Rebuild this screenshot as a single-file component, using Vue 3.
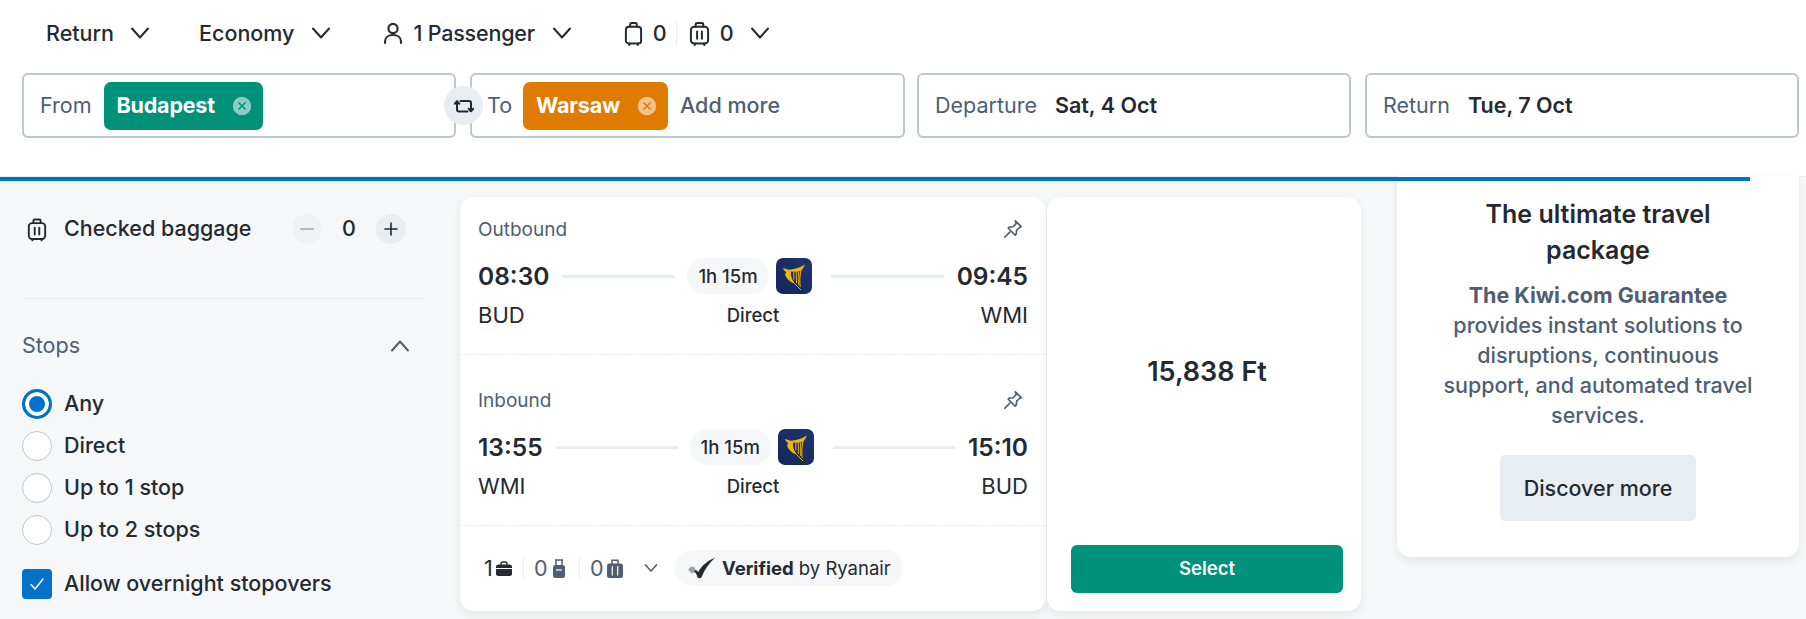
<script setup>
const radios = [
  { label: 'Any', checked: true },
  { label: 'Direct', checked: false },
  { label: 'Up to 1 stop', checked: false },
  { label: 'Up to 2 stops', checked: false }
]

const legs = [
  { title: 'Outbound', depart: '08:30', arrive: '09:45', from: 'BUD', to: 'WMI', duration: '1h 15m' },
  { title: 'Inbound', depart: '13:55', arrive: '15:10', from: 'WMI', to: 'BUD', duration: '1h 15m' }
]
</script>

<template>
  <div class="page">
    <header class="header">
      <div class="options">
        <button class="option option-trip">Return
          <svg class="chevron" viewBox="0 0 18 18"><path d="M1 4.500l8 9 8-9" /></svg>
        </button>
        <button class="option option-cabin">Economy
          <svg class="chevron" viewBox="0 0 18 18"><path d="M1 4.500l8 9 8-9" /></svg>
        </button>
        <button class="option option-pax">
          <svg class="line-icon person" viewBox="0 0 20 24">
            <circle cx="10" cy="7.500" r="4.600" />
            <path d="M2 22v-1.500c0-4 3.400-6.500 8-6.500s8 2.500 8 6.500V22" />
          </svg>
          <span class="pax-text">1 Passenger</span>
          <svg class="chevron" viewBox="0 0 18 18"><path d="M1 4.500l8 9 8-9" /></svg>
        </button>
        <div class="bags">
          <svg class="line-icon cabin-bag" viewBox="0 0 20 26">
            <rect x="2" y="6" width="16" height="17.500" rx="3" />
            <path d="M6.500 6V3.500q0-1.500 1.500-1.500h4q1.500 0 1.500 1.500V6M5.500 23.500V25M14.500 23.500V25" />
          </svg>
          <span class="bag-count">0</span>
          <span class="bag-sep"></span>
          <svg class="line-icon hold-bag" viewBox="0 0 22 26">
            <rect x="2" y="6" width="18" height="17.500" rx="3.500" />
            <path d="M7 6V3.500q0-1.500 1.500-1.500h5q1.500 0 1.500 1.500V6M8.500 11v7.500M13.500 11v7.500M6 23.500V25M16 23.500V25" />
          </svg>
          <span class="bag-count">0</span>
          <svg class="chevron" viewBox="0 0 18 18"><path d="M1 4.500l8 9 8-9" /></svg>
        </div>
      </div>

      <div class="fields">
        <div class="field">
          <span class="field-label">From</span>
          <span class="chip chip-green">
            <span class="chip-text">Budapest</span>
            <svg class="chip-clear" viewBox="0 0 20 20">
              <circle cx="10" cy="10" r="10" />
              <path d="M6.500 6.500l7 7M13.500 6.500l-7 7" />
            </svg>
          </span>
          <button class="swap">
            <svg viewBox="0 0 20 20">
              <path d="M3 5.500v8q0 2 2 2h8.500" />
              <path d="M.7 7.800L3 5.300l2.300 2.500" />
              <path d="M17 15V7q0-2-2-2H6.500" />
              <path d="M14.700 12.700L17 15.200l2.300-2.500" />
            </svg>
          </button>
        </div>
        <div class="field field-to">
          <span class="field-label">To</span>
          <span class="chip chip-orange">
            <span class="chip-text">Warsaw</span>
            <svg class="chip-clear" viewBox="0 0 20 20">
              <circle cx="10" cy="10" r="10" />
              <path d="M6.500 6.500l7 7M13.500 6.500l-7 7" />
            </svg>
          </span>
          <span class="add-more">Add more</span>
        </div>
        <div class="field field-date">
          <span class="field-label">Departure</span>
          <span class="field-value">Sat, 4 Oct</span>
        </div>
        <div class="field field-date">
          <span class="field-label">Return</span>
          <span class="field-value">Tue, 7 Oct</span>
        </div>
      </div>
    </header>

    <main class="main">
      <div class="progress"></div>

      <aside class="filters">
        <div class="baggage-row">
          <svg class="line-icon filter-bag" viewBox="0 0 22 26">
            <rect x="2" y="6" width="18" height="17.500" rx="3.500" />
            <path d="M7 6V3.500q0-1.500 1.500-1.500h5q1.500 0 1.500 1.500V6M8.500 11v7.500M13.500 11v7.500M6 23.500V25M16 23.500V25" />
          </svg>
          <span class="baggage-label">Checked baggage</span>
          <div class="stepper">
            <button class="step step-off"><svg viewBox="0 0 14 14"><path d="M1 7h12" /></svg></button>
            <span class="step-value">0</span>
            <button class="step"><svg viewBox="0 0 14 14"><path d="M1 7h12M7 1v12" /></svg></button>
          </div>
        </div>

        <div class="stops-head">
          <span>Stops</span>
          <svg class="chevron chevron-up" viewBox="0 0 18 18"><path d="M1 13.500l8-9 8 9" /></svg>
        </div>

        <div class="radios">
          <label class="radio-row" v-for="radio in radios" :key="radio.label">
            <span class="radio" :class="{ 'radio-on': radio.checked }"></span>
            <span class="row-text">{{ radio.label }}</span>
          </label>
        </div>

        <label class="check-row">
          <span class="checkbox">
            <svg viewBox="0 0 16 16"><path d="M2 8.500l4 4.500 8-10" /></svg>
          </span>
          <span class="row-text">Allow overnight stopovers</span>
        </label>
      </aside>

      <section class="ticket">
        <div class="ticket-info">
          <div class="leg" v-for="leg in legs" :key="leg.title">
            <div class="leg-head">
              <span>{{ leg.title }}</span>
              <svg class="pin" viewBox="0 0 24 24">
                <path d="M14.500 3l6.500 6.500-1.600.6-3.400 3.200-.5 4.200-1.200 1.200-7.500-7.500 1.200-1.200 4.200-.5 3.200-3.400z" />
                <path d="M8.500 15.500L3 21" />
              </svg>
            </div>
            <div class="leg-times">
              <strong>{{ leg.depart }}</strong>
              <span class="leg-line leg-line-left"></span>
              <span class="duration">{{ leg.duration }}</span>
              <svg class="carrier" viewBox="0 0 36 36">
                <defs>
                  <linearGradient id="navy" x1="0" y1="1" x2="1" y2="0">
                    <stop offset="0" stop-color="#14265a" />
                    <stop offset="1" stop-color="#20356f" />
                  </linearGradient>
                </defs>
                <rect width="36" height="36" rx="7" fill="url(#navy)" />
                <path class="harp-solid" d="M7 10C10 11 12 12 15 11.500C20 11 25 9 29 6.500C28 9 26.500 11.500 24.500 13C21 14 18 14 15 13.500C14.500 17 15.500 20.500 18 24L16.500 25C13 23 10 20 9 16.500C10 15.500 10 14 9.500 13.500C8 12.500 7.500 11.500 7 10Z" />
                <path class="harp-line" d="M16 23l9 9M25 12c-1.200 6-1.500 11-.8 17M17.800 14v7.500M20.200 14l.3 11M22.600 14l.2 13" />
              </svg>
              <span class="leg-line"></span>
              <strong>{{ leg.arrive }}</strong>
            </div>
            <div class="leg-codes">
              <span>{{ leg.from }}</span>
              <span class="leg-direct">Direct</span>
              <span class="leg-to">{{ leg.to }}</span>
            </div>
          </div>

          <div class="ticket-foot">
            <span class="foot-num foot-dark">1</span>
            <svg class="foot-icon briefcase" viewBox="0 0 16 15">
              <path d="M5 4V2.500Q5 1 6.500 1h3Q11 1 11 2.500V4" fill="none" stroke="#252a31" stroke-width="1.400" />
              <path d="M2.500 3.500h11Q16 3.500 16 6v6.500q0 2.500-2.500 2.500h-11Q0 15 0 12.500V6q0-2.500 2.500-2.500z" fill="#252a31" />
              <path d="M0 7.500h16" stroke="#fff" stroke-width="1" />
            </svg>
            <span class="foot-sep"></span>
            <span class="foot-num">0</span>
            <svg class="foot-icon trolley" viewBox="0 0 12 19">
              <path d="M3 6V1h6v5M2 1h8" fill="none" stroke="#4f5e71" stroke-width="1.500" />
              <rect y="6" width="12" height="13" rx="2.500" fill="#4f5e71" />
              <path d="M3 11h6" stroke="#fff" stroke-width="1.200" />
            </svg>
            <span class="foot-sep foot-sep-wide"></span>
            <span class="foot-num">0</span>
            <svg class="foot-icon suitcase" viewBox="0 0 16 19">
              <path d="M5 5V1.200h6V5" fill="none" stroke="#4f5e71" stroke-width="1.500" />
              <rect y="4.500" width="16" height="14.500" rx="2.500" fill="#4f5e71" />
              <path d="M5.300 7v9.500M10.700 7v9.500" stroke="#fff" stroke-width="1.200" />
            </svg>
            <svg class="chevron chevron-foot" viewBox="0 0 18 18"><path d="M2 5l7 8 7-8" /></svg>
            <span class="verified">
              <svg class="verified-mark" viewBox="0 0 34 26">
                <path d="M1 15l4-4 4 1.500 1.500 5-4.500 2z" fill="#9aa3ad" />
                <path d="M8 16.500c2-1.500 4-1 5 1.500C17 10.500 24 4.500 33 1c-7 6.500-12.500 14-16 23-1.500 1.800-4 1.500-4.800-.5-.8-2.500-2.200-5-4.200-7z" fill="#252a31" />
              </svg>
              <span><b>Verified</b> by Ryanair</span>
            </span>
          </div>
        </div>

        <div class="ticket-price">
          <div class="price">15,838 Ft</div>
          <button class="select">Select</button>
        </div>
      </section>

      <aside class="promo">
        <h2>The ultimate travel package</h2>
        <p><b>The Kiwi.com Guarantee</b> provides instant solutions to disruptions, continuous support, and automated travel services.</p>
        <button class="discover">Discover more</button>
      </aside>
    </main>
  </div>
</template>

<style scoped>
.page {
  width: 1806px;
  height: 619px;
  overflow: hidden;
  background: #f5f7f9;
  color: #252a31;
  font-family: Inter, "Noto Sans", sans-serif;
  font-size: 21.5px;
}

button {
  border: 0;
  background: none;
  padding: 0;
  color: inherit;
  font: inherit;
}

svg {
  display: block;
  flex: none;
}

.chevron {
  width: 18px;
  height: 18px;
  fill: none;
  stroke: #252a31;
  stroke-width: 2;
  stroke-linecap: round;
  stroke-linejoin: round;
}

.line-icon {
  fill: none;
  stroke: #252a31;
  stroke-width: 2.100;
  stroke-linecap: round;
  stroke-linejoin: round;
}

/* header */
.header {
  height: 176px;
  background: #fff;
  border-bottom: 1px solid #e8edf1;
  box-sizing: content-box;
}

.options {
  display: flex;
  align-items: center;
  height: 66px;
  padding-left: 46px;
}

.option {
  display: flex;
  align-items: center;
  font-weight: 500;
}

.option-trip {
  gap: 17px;
  margin-right: 50px;
}

.option-cabin {
  gap: 18px;
  margin-right: 53px;
}

.option-pax {
  gap: 10px;
  margin-right: 53px;
}

.option-pax .chevron {
  margin-left: 8px;
}

.pax-text {
  letter-spacing: -0.2px;
}

.person {
  width: 20px;
  height: 24px;
}

.bags {
  display: flex;
  align-items: center;
  font-weight: 500;
}

.cabin-bag {
  width: 19px;
  height: 25px;
}

.hold-bag {
  width: 21px;
  height: 25px;
}

.bag-count {
  width: 14px;
  margin-left: 10px;
}

.bag-sep {
  width: 1px;
  height: 22px;
  margin: 0 12px 0 9px;
  background: #e8edf1;
}

.bags .chevron {
  margin-left: 17px;
}

.fields {
  display: flex;
  gap: 14px;
  padding: 7px 7px 0 22px;
}

.field {
  position: relative;
  display: flex;
  align-items: center;
  box-sizing: border-box;
  width: 434px;
  height: 65px;
  padding-left: 16px;
  background: #fff;
  border: 2px solid #bac7d5;
  border-radius: 6px;
}

.field-to {
  width: 435px;
  margin-right: -2px;
  padding-left: 15px;
}

.field-label {
  margin-right: 12px;
  margin-bottom: 1px;
  color: #4f5e71;
}

.field-to .field-label {
  margin-right: 11px;
}

.field-date .field-label {
  margin-right: 18px;
}

.field-value {
  margin-bottom: 1px;
  font-weight: 600;
}

.chip {
  display: flex;
  align-items: center;
  height: 48px;
  padding: 0 11px 0 13px;
  border-radius: 7px;
  color: #fff;
  font-weight: 700;
}

.chip-text {
  margin-bottom: 1px;
  letter-spacing: -0.2px;
}

.chip-green {
  background: #00917a;
  gap: 17px;
}

.chip-orange {
  background: #df7b00;
  gap: 17px;
}

.chip-clear {
  width: 20px;
  height: 20px;
  fill: rgba(255, 255, 255, 0.55);
  stroke-width: 1.500;
}

.chip-green .chip-clear {
  stroke: #00917a;
}

.chip-orange .chip-clear {
  stroke: #df7b00;
}

.add-more {
  margin-left: 12px;
  margin-bottom: 1px;
  color: #4f5e71;
  font-weight: 500;
}

.swap {
  position: absolute;
  right: -29px;
  top: 11px;
  z-index: 2;
  display: flex;
  align-items: center;
  justify-content: center;
  width: 39px;
  height: 39px;
  border-radius: 50%;
  background: #e8edf1;
}

.swap svg {
  width: 20px;
  height: 20px;
  fill: none;
  stroke: #252a31;
  stroke-width: 2;
  stroke-linecap: round;
  stroke-linejoin: round;
}

/* main */
.main {
  position: relative;
  display: flex;
  align-items: flex-start;
  gap: 36px;
  padding-left: 22px;
}

.progress {
  position: absolute;
  top: 0;
  left: 0;
  z-index: 3;
  width: 1750px;
  height: 4px;
  background: #0172cb;
}

.filters {
  flex: none;
  width: 402px;
  padding-top: 37px;
}

.baggage-row {
  display: flex;
  align-items: center;
  height: 30px;
  padding-bottom: 54px;
  border-bottom: 1px solid #e8edf1;
}

.filter-bag {
  width: 20px;
  height: 25px;
  margin: 0 17px 0 5px;
}

.baggage-label {
  width: 228px;
  margin-bottom: 3px;
  font-weight: 500;
}

.stepper {
  display: flex;
  align-items: center;
}

.step {
  display: flex;
  align-items: center;
  justify-content: center;
  width: 30px;
  height: 30px;
  border-radius: 50%;
  background: #e8edf1;
}

.step svg {
  width: 14px;
  height: 14px;
  fill: none;
  stroke: #252a31;
  stroke-width: 1.600;
  stroke-linecap: round;
}

.step-off {
  opacity: 0.4;
}

.step-value {
  width: 54px;
  margin-bottom: 2px;
  text-align: center;
  font-weight: 500;
}

.stops-head {
  display: flex;
  align-items: center;
  justify-content: space-between;
  height: 24px;
  margin-top: 34px;
  padding-right: 15px;
  color: #4f5e71;
}

.chevron-up {
  margin-top: 2px;
  stroke: #4f5e71;
}

.radios {
  display: flex;
  flex-direction: column;
  gap: 12px;
  margin-top: 32px;
}

.radio-row,
.check-row {
  display: flex;
  align-items: center;
  gap: 12px;
  height: 30px;
  font-weight: 500;
}

.row-text {
  margin-bottom: 2px;
}

.radio {
  box-sizing: border-box;
  width: 30px;
  height: 30px;
  border: 1px solid #bac7d5;
  border-radius: 50%;
  background: #fff;
}

.radio-on {
  border: 3px solid #0172cb;
  box-shadow: inset 0 0 0 4px #fff;
  background: #0172cb;
}

.check-row {
  margin-top: 24px;
}

.checkbox {
  display: flex;
  align-items: center;
  justify-content: center;
  width: 30px;
  height: 30px;
  border-radius: 4px;
  background: #0172cb;
}

.checkbox svg {
  width: 16px;
  height: 16px;
  fill: none;
  stroke: #fff;
  stroke-width: 1.500;
  stroke-linecap: round;
  stroke-linejoin: round;
}

.ticket {
  flex: none;
  display: flex;
  gap: 1px;
  margin-top: 20px;
  height: 414px;
}

.ticket-info,
.ticket-price {
  background: #fff;
  border-radius: 14px;
  box-shadow: 0 4px 10px rgba(37, 42, 49, 0.08);
}

.ticket-info {
  display: flex;
  flex-direction: column;
  box-sizing: border-box;
  width: 586px;
}

.leg {
  box-sizing: border-box;
  height: 158px;
  padding: 20px 18px 0;
  border-bottom: 1px dashed #e8edf1;
}

.leg + .leg {
  height: 171px;
  padding-top: 33px;
}

.leg-head {
  display: flex;
  align-items: center;
  justify-content: space-between;
  height: 24px;
  color: #4f5e71;
  font-size: 19px;
}

.pin {
  width: 22px;
  height: 22px;
  margin-right: 4px;
  fill: none;
  stroke: #4f5e71;
  stroke-width: 1.800;
  stroke-linecap: round;
  stroke-linejoin: round;
}

.leg-times {
  display: flex;
  align-items: center;
  height: 36px;
  margin-top: 17px;
}

.leg-times strong {
  font-size: 24.500px;
  font-weight: 600;
}

.leg-line {
  flex: 1;
  height: 3px;
  margin-left: 19px;
  margin-right: 13px;
  background: #e8edf1;
}

.leg-line-left {
  margin-left: 13px;
  margin-right: 12px;
}

.duration {
  display: flex;
  align-items: center;
  height: 36px;
  padding: 0 11px;
  border-radius: 18px;
  background: #f5f7f9;
  font-size: 18.500px;
  font-weight: 500;
}

.carrier {
  width: 36px;
  height: 36px;
  margin-left: 7px;
}

.harp-solid {
  fill: #f1b30f;
}

.harp-line {
  fill: none;
  stroke: #f1b30f;
  stroke-width: 1;
}

.leg-codes {
  display: grid;
  grid-template-columns: 1fr auto 1fr;
  align-items: center;
  height: 24px;
  margin-top: 8px;
  font-size: 22px;
}

.leg-direct {
  font-size: 18.500px;
  font-weight: 500;
}

.leg-to {
  text-align: right;
}

.ticket-foot {
  display: flex;
  align-items: center;
  flex: 1;
  padding-left: 24px;
  padding-bottom: 1px;
}

.foot-num {
  width: 12px;
  color: #4f5e71;
  text-align: center;
}

.foot-dark {
  width: 8px;
  color: #252a31;
}

.foot-icon {
  margin-left: 4px;
}

.briefcase {
  width: 16px;
  height: 15px;
}

.trolley {
  width: 12px;
  height: 19px;
  margin-left: 7px;
}

.suitcase {
  width: 16px;
  height: 19px;
  margin-left: 5px;
}

.foot-sep {
  width: 1px;
  height: 20px;
  margin: 0 10px 0 11px;
  background: #e8edf1;
}

.foot-sep-wide {
  margin-left: 14px;
}

.chevron-foot {
  width: 14px;
  height: 14px;
  margin-left: 21px;
  stroke: #4f5e71;
}

.verified {
  display: flex;
  align-items: center;
  gap: 6px;
  height: 36px;
  margin-left: 17px;
  padding: 0 12px;
  border-radius: 18px;
  background: #f5f7f9;
  font-size: 18.500px;
}

.verified b {
  font-weight: 700;
}

.verified-mark {
  width: 29px;
  height: 22px;
}

.ticket-price {
  display: flex;
  flex-direction: column;
  align-items: center;
  box-sizing: border-box;
  width: 314px;
  padding: 0 18px 18px 24px;
}

.price {
  margin-top: 158px;
  font-size: 27px;
  font-weight: 600;
}

.select {
  width: 272px;
  height: 48px;
  margin-top: auto;
  padding-bottom: 3px;
  border-radius: 6px;
  background: #00917a;
  color: #fff;
  font-size: 18.500px;
  font-weight: 600;
}

.promo {
  flex: none;
  box-sizing: border-box;
  width: 402px;
  height: 381px;
  margin-top: -1px;
  padding: 20px 36px 0;
  border-radius: 0 0 14px 14px;
  background: #fff;
  box-shadow: 0 4px 10px rgba(37, 42, 49, 0.08);
  text-align: center;
}

.promo h2 {
  margin: 0 10px;
  font-size: 25px;
  font-weight: 600;
  line-height: 36px;
}

.promo p {
  margin: 12px 0 0;
  color: #4f5e71;
  font-size: 21.500px;
  font-weight: 500;
  line-height: 30px;
}

.promo b {
  font-weight: 700;
}

.discover {
  width: 196px;
  height: 66px;
  margin-top: 25px;
  border-radius: 5px;
  background: #e8edf1;
  font-weight: 500;
}
</style>
